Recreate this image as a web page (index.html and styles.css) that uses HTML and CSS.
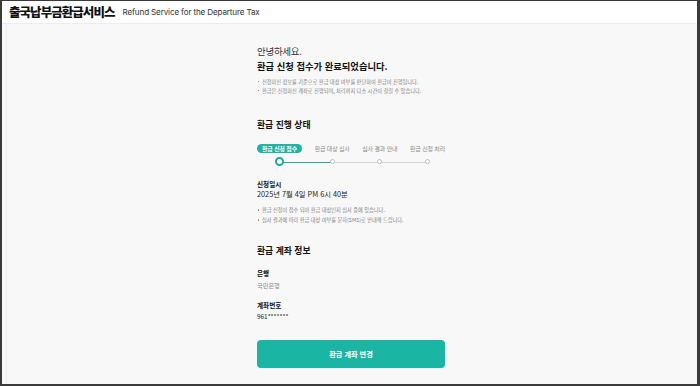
FILE: index.html
```html
<!DOCTYPE html>
<html lang="ko">
<head>
<meta charset="utf-8">
<title>출국납부금환급서비스</title>
<link rel="stylesheet" href="styles.css">
</head>
<body>
<div class="frame">
  <header class="top">
    <h1 class="brand">출국납부금환급서비스</h1>
    <span class="brand-en">Refund Service for the Departure Tax</span>
  </header>
  <main class="content">
    <div class="col">
      <p class="hello">안녕하세요.</p>
      <h2 class="done">환급 신청 접수가 완료되었습니다.</h2>
      <ul class="notes notes-top">
        <li>신청하신 정보를 기준으로 환급 대상 여부를 판단하여 환급이 진행됩니다.</li>
        <li>환급은 신청하신 계좌로 진행되며, 처리까지 다소 시간이 걸릴 수 있습니다.</li>
      </ul>

      <h3 class="sec sec-progress">환급 진행 상태</h3>
      <div class="steps">
        <div class="track"></div>
        <div class="step active">
          <span class="step-label">환급 신청 접수</span>
          <span class="dot"></span>
        </div>
        <div class="step">
          <span class="step-label">환급 대상 심사</span>
          <span class="dot"></span>
        </div>
        <div class="step">
          <span class="step-label">심사 결과 안내</span>
          <span class="dot"></span>
        </div>
        <div class="step">
          <span class="step-label">환급 신청 처리</span>
          <span class="dot"></span>
        </div>
      </div>

      <p class="field-label fl-date">신청일시</p>
      <p class="field-value fv-date">2025년 7월 4일 PM 6시 40분</p>
      <ul class="notes notes-date">
        <li>환급 신청이 접수 되어 환급 대상인지 심사 중에 있습니다.</li>
        <li>심사 결과에 따라 환급 대상 여부를 문자(SMS)로 안내해 드립니다.</li>
      </ul>

      <h3 class="sec sec-account">환급 계좌 정보</h3>
      <p class="field-label fl-bank">은행</p>
      <p class="field-value fv-gray">국민은행</p>
      <p class="field-label fl-acc">계좌번호</p>
      <p class="field-value fv-acc">961*******</p>

      <button class="btn" type="button">환급 계좌 변경</button>
    </div>
  </main>
</div>
</body>
</html>
```
FILE: styles.css
```css
* { box-sizing: border-box; }
html, body {
  margin: 0;
  padding: 0;
  background: #ffffff;
}
body {
  font-family: "Noto Sans CJK KR", "Noto Sans", sans-serif;
  color: #222222;
}
.frame {
  width: 700px;
  height: 386px;
  border-top: 1px solid #3a3a3a;
  border-left: 2px solid #3a3a3a;
  border-right: 3px solid #3a3a3a;
  border-bottom: 2px solid #3a3a3a;
  background: #f8f8f8;
  display: flex;
  flex-direction: column;
  overflow: hidden;
}
.top {
  height: 23px;
  background: #ffffff;
  border-bottom: 1px solid #ececec;
  display: flex;
  align-items: center;
  padding-left: 7px;
  gap: 8px;
  flex-shrink: 0;
}
.brand {
  margin: 0;
  font-size: 12.5px;
  font-weight: 900;
  letter-spacing: -0.95px;
  color: #111;
  line-height: 1;
}
.brand-en {
  font-family: "Inter", "Noto Sans", sans-serif;
  font-size: 8.1px;
  color: #333;
  letter-spacing: -0.15px;
}
.content {
  flex: 1;
  display: flex;
  justify-content: center;
  border-left: 1px solid #ececec;
  margin-left: 4px;
  padding-right: 2px;
}
.col {
  width: 188px;
  padding-top: 21px;
  display: flex;
  flex-direction: column;
}
p, h2, h3, ul { margin: 0; }
.hello {
  font-size: 9.5px;
  line-height: 12px;
  color: #333;
  letter-spacing: -0.3px;
}
.done {
  margin-top: 3px;
  font-size: 9.3px;
  line-height: 12px;
  font-weight: 700;
  color: #111;
}
.notes {
  list-style: none;
  padding: 0;
  font-size: 5.2px;
  color: #7e7e7e;
}
.notes li {
  position: relative;
  padding-left: 5px;
  white-space: nowrap;
}
.notes li::before {
  content: "";
  position: absolute;
  left: 0.5px;
  top: 50%;
  width: 1.6px;
  height: 1.6px;
  margin-top: -0.8px;
  border-radius: 50%;
  background: #7e7e7e;
}
.notes-top { margin-top: 5px; line-height: 9px; }
.notes-date { margin-top: 6px; line-height: 10px; }
.sec {
  font-size: 8.8px;
  line-height: 12px;
  font-weight: 700;
  color: #111;
}
.sec-progress { margin-top: 24px; }
.sec-account { margin-top: 20px; }

.steps {
  margin-top: 13px;
  position: relative;
  display: flex;
  justify-content: space-between;
}
.track {
  position: absolute;
  left: 22px;
  right: 19px;
  top: 17.5px;
  height: 1px;
  background: linear-gradient(to right, #2aa596 0, #2aa596 52px, #d4d4d4 52px, #d4d4d4 100%);
}
.step {
  display: flex;
  flex-direction: column;
  align-items: center;
  gap: 4px;
  position: relative;
}
.step-label {
  font-size: 5.9px;
  line-height: 9px;
  height: 9px;
  color: #8a8a8a;
  white-space: nowrap;
  letter-spacing: -0.1px;
}
.step.active .step-label {
  background: #1fb3a3;
  color: #fff;
  font-weight: 700;
  border-radius: 5px;
  padding: 0 4px;
  width: 45px;
  text-align: center;
}
.dot {
  width: 5px;
  height: 5px;
  margin: 2px 0;
  border-radius: 50%;
  border: 1px solid #bdbdbd;
  background: #ffffff;
  position: relative;
}
.step.active .dot {
  width: 9px;
  height: 9px;
  margin: 0;
  border: 2px solid #1fa898;
}

.field-label {
  font-size: 6.6px;
  line-height: 9px;
  font-weight: 700;
  color: #111;
}
.field-value {
  font-size: 7.3px;
  line-height: 10px;
  color: #222;
}
.fl-date { margin-top: 14px; }
.fv-date { margin-top: 0; }
.fl-bank { margin-top: 11.5px; }
.fv-gray { margin-top: 3.5px; color: #888; font-size: 6.2px; }
.fl-acc { margin-top: 9.5px; }
.fv-acc { margin-top: 2.5px; font-size: 6.4px; }

.btn {
  margin-top: 18px;
  height: 28px;
  width: 188px;
  border: 0;
  border-radius: 4px;
  background: #1bb5a4;
  color: #fff;
  font-family: "Noto Sans CJK KR", "Noto Sans", sans-serif;
  font-size: 7.2px;
  font-weight: 700;
  padding: 0;
}
```
